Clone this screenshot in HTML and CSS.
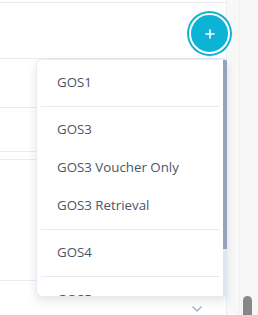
FILE: index.html
```html
<!DOCTYPE html>
<html>
<head>
<meta charset="utf-8">
<link rel="stylesheet" href="styles.css">
</head>
<body>
<div class="page">
  <div class="main">
    <div class="toolbar"></div>
    <div class="row r1"></div>
    <div class="row r2"></div>
    <div class="row r3"></div>
    <div class="row r4"></div>
    <div class="row r5">
      <svg class="chev" width="10" height="6" viewBox="0 0 10 6"><path d="M1 1 L5 5 L9 1" fill="none" stroke="#a9b4c6" stroke-width="1.6" stroke-linecap="round" stroke-linejoin="round"/></svg>
    </div>
  </div>
  <div class="side">
    <div class="side-gap"></div>
    <div class="side-track"><div class="side-thumb"></div></div>
  </div>

  <button class="fab" type="button">
    <span class="fab-inner">
      <svg width="10" height="10" viewBox="0 0 10 10"><path d="M5 1 V9 M1 5 H9" stroke="#ffffff" stroke-width="1.6" stroke-linecap="round"/></svg>
    </span>
  </button>

  <div class="dropdown">
    <ul class="list">
      <li class="item">GOS1</li>
      <li class="divider"></li>
      <li class="item">GOS3</li>
      <li class="item">GOS3 Voucher Only</li>
      <li class="item">GOS3 Retrieval</li>
      <li class="divider"></li>
      <li class="item">GOS4</li>
      <li class="divider"></li>
      <li class="item">GOS5</li>
    </ul>
    <div class="scroll"><div class="scroll-thumb"></div></div>
  </div>
</div>
</body>
</html>
```

FILE: styles.css
```css
* { box-sizing: border-box; }
html, body { margin: 0; padding: 0; }
body {
  width: 258px;
  height: 315px;
  overflow: hidden;
  background: #ffffff;
  font-family: "Open Sans", "Noto Sans", sans-serif;
}
.page {
  position: relative;
  display: flex;
  height: 315px;
}
.main {
  width: 227px;
  padding-top: 2px;
  background: #ffffff;
  border-right: 1px solid #eceef1;
}
.toolbar {
  height: 57px;
  border-top: 1px solid #e6e9ee;
  border-bottom: 1px solid #e6ebf2;
}
.row { border-bottom: 1px solid #e6ebf2; }
.r1 { height: 49px; }
.r2 { height: 44px; }
.r3 { height: 8px; }
.r4 { height: 121px; }
.r5 {
  height: 40px;
  border-bottom: none;
  display: flex;
  justify-content: flex-end;
  padding-right: 24px;
  padding-top: 25px;
}
.chev { display: block; }
.side {
  flex: 1;
  display: flex;
  background: #f8f8f9;
}
.side-gap { width: 12px; }
.side-track {
  flex: 1;
  display: flex;
  justify-content: center;
  align-items: flex-end;
  background: #f6f6f7;
  border-left: 1px solid #f0f0f2;
}
.side-thumb {
  width: 9px;
  height: 19px;
  margin-right: 4px;
  background: #878787;
  border-radius: 5px 5px 0 0;
}
.fab {
  position: absolute;
  left: 187px;
  top: 11px;
  width: 45px;
  height: 45px;
  padding: 2px;
  border: none;
  border-radius: 50%;
  background: #0bb4d4;
  display: flex;
}
.fab-inner {
  flex: 1;
  border: 2px solid #ffffff;
  border-radius: 50%;
  background: #0bb4d4;
  display: flex;
  align-items: center;
  justify-content: center;
}
.dropdown {
  position: absolute;
  left: 36px;
  top: 59px;
  width: 191px;
  height: 238px;
  display: flex;
  background: #ffffff;
  border: 1px solid #e8ecf2;
  border-right: none;
  border-radius: 6px 2px 2px 6px;
  box-shadow: 0 4px 10px rgba(30, 40, 60, 0.12);
  overflow: hidden;
}
.list {
  flex: 1;
  margin: 0;
  padding: 3px 0 0;
  list-style: none;
}
.item {
  padding: 8px 20px;
  font-size: 13.3px;
  line-height: 22px;
  color: #4b5567;
  white-space: nowrap;
}
.divider {
  height: 1px;
  margin: 5px 4px 3px;
  background: #e5e9f0;
}
.scroll {
  width: 4px;
  background: #dee6f0;
}
.scroll-thumb {
  height: 189px;
  background: #94a2bc;
}
```
